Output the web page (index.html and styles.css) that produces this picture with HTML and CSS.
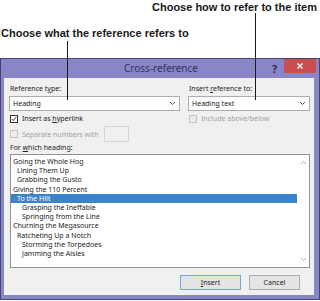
FILE: index.html
```html
<!DOCTYPE html>
<html>
<head>
<meta charset="utf-8">
<link rel="stylesheet" href="styles.css">
</head>
<body>
<div class="page">
  <div class="captions">
    <div class="cap cap-how">Choose how to refer to the item</div>
    <div class="cap cap-what">Choose what the reference refers to</div>
  </div>
  <div class="dialog">
    <div class="titlebar">
      <span class="title">Cross-reference</span>
      <span class="help">?</span>
      <span class="close"><svg width="8" height="8" viewBox="0 0 8 8"><path d="M1.5 1.5 L6.5 6.5 M6.5 1.5 L1.5 6.5" stroke="#fff" stroke-width="1.4"/></svg></span>
    </div>
    <div class="client">
      <div class="grid">
        <div class="label">Reference t<u>y</u>pe:</div>
        <div class="label">Insert <u>r</u>eference to:</div>
        <div class="select"><span>Heading</span><svg class="chev" width="7" height="5" viewBox="0 0 7 5"><path d="M1 1 L3.5 3.5 L6 1" fill="none" stroke="#555" stroke-width="1"/></svg></div>
        <div class="select"><span>Heading text</span><svg class="chev" width="7" height="5" viewBox="0 0 7 5"><path d="M1 1 L3.5 3.5 L6 1" fill="none" stroke="#555" stroke-width="1"/></svg></div>
        <div class="check-row"><span class="box checked"><svg width="8" height="8" viewBox="0 0 8 8"><path d="M1.3 4.2 L3.1 6 L6.8 1.6" fill="none" stroke="#222" stroke-width="1.3"/></svg></span><span>Insert as <u>h</u>yperlink</span></div>
        <div class="check-row disabled"><span class="box"></span><span>Include above/below</span></div>
      </div>
      <div class="sep-row disabled"><span class="box"></span><span class="sep-text">Separate numbers with</span><span class="sep-input"></span></div>
      <div class="label list-label">For <u>w</u>hich heading:</div>
      <div class="listbox">
        <div class="items">
          <div class="item l0">Going the Whole Hog</div>
          <div class="item l1">Lining Them Up</div>
          <div class="item l1">Grabbing the Gusto</div>
          <div class="item l0">Giving the 110 Percent</div>
          <div class="item l1 sel">To the Hilt</div>
          <div class="item l2">Grasping the Ineffable</div>
          <div class="item l2">Springing from the Line</div>
          <div class="item l0">Churning the Megasource</div>
          <div class="item l1">Ratcheting Up a Notch</div>
          <div class="item l2">Storming the Torpedoes</div>
          <div class="item l2">Jamming the Aisles</div>
        </div>
        <div class="scrollbar">
          <svg width="7" height="5" viewBox="0 0 7 5"><path d="M1 4 L3.5 1.5 L6 4" fill="none" stroke="#b0b0b0" stroke-width="1"/></svg>
          <svg width="7" height="5" viewBox="0 0 7 5"><path d="M1 1 L3.5 3.5 L6 1" fill="none" stroke="#b0b0b0" stroke-width="1"/></svg>
        </div>
      </div>
      <div class="buttons">
        <div class="btn default"><u>I</u>nsert</div>
        <div class="btn cancel">Cancel</div>
      </div>
    </div>
  </div>
  <div class="leader leader-what"></div>
  <div class="leader leader-how"></div>
</div>
</body>
</html>
```
FILE: styles.css
```css
html, body {
  margin: 0;
  padding: 0;
  background: #ffffff;
}
.page {
  position: relative;
  width: 320px;
  height: 301px;
  overflow: hidden;
}
.captions {
  height: 58px;
  font-family: "Liberation Sans Narrow", "Liberation Sans", Arial, sans-serif;
  font-weight: bold;
  font-size: 11px;
  line-height: 12px;
  color: #1a1a1a;
}
.cap-how {
  padding-top: 1px;
  margin-left: 152px;
  white-space: nowrap;
}
.cap-what {
  margin-top: 14px;
  margin-left: 1px;
  white-space: nowrap;
}
.leader {
  position: absolute;
  width: 1px;
  background: #1a1a1a;
}
.leader-what {
  left: 67px;
  top: 41px;
  height: 59px;
}
.leader-how {
  left: 255px;
  top: 13px;
  height: 87px;
}
.dialog {
  width: 318px;
  height: 240px;
  border: 1px solid #44426e;
  background: #8886c7;
  display: flex;
  flex-direction: column;
  font-family: "Noto Sans", "Open Sans", sans-serif;
  font-size: 7px;
  color: #222;
}
.titlebar {
  height: 19px;
  position: relative;
  display: flex;
  align-items: center;
  justify-content: center;
}
.title {
  font-size: 10px;
  color: #34335a;
  margin-left: 2px;
  margin-top: -1px;
}
.help {
  position: absolute;
  left: 271px;
  top: 2px;
  font-size: 11px;
  font-weight: bold;
  color: #2e2d4a;
}
.close {
  position: absolute;
  left: 283px;
  top: 0;
  width: 32px;
  height: 14px;
  background: #c94f50;
  display: flex;
  align-items: center;
  justify-content: center;
}
.client {
  flex: 1;
  margin: 0 5px 4px 3px;
  background: #f0f0f0;
  padding: 6px 4px 5px 5px;
  display: flex;
  flex-direction: column;
}
.grid {
  display: grid;
  grid-template-columns: 171px 122px;
  column-gap: 8px;
}
.label {
  line-height: 10px;
  height: 10px;
  padding-left: 1px;
  white-space: nowrap;
}
.grid .label {
  margin-bottom: 2px;
}
.select {
  height: 13px;
  border: 1px solid #abadb3;
  background: #fff;
  display: flex;
  align-items: center;
  justify-content: space-between;
  padding: 0 3px 0 3px;
}
.check-row {
  display: flex;
  align-items: center;
  height: 9px;
  margin-top: 3px;
  padding-left: 1px;
  gap: 4px;
  white-space: nowrap;
}
.box {
  width: 6px;
  height: 6px;
  border: 1px solid #333;
  background: #fff;
  display: flex;
  align-items: center;
  justify-content: center;
  flex: none;
}
.box svg {
  width: 6px;
  height: 6px;
}
.disabled {
  color: #a0a0a0;
}
.disabled .box {
  border-color: #c6c6c6;
  background: #ececec;
}
.sep-row {
  display: flex;
  align-items: center;
  height: 16px;
  margin-top: 3px;
  padding-left: 1px;
  gap: 4px;
  white-space: nowrap;
}
.sep-text {
  width: 78px;
}
.sep-input {
  width: 23px;
  height: 14px;
  border: 1px solid #d5d5d5;
  background: #f0f0f0;
}
.list-label {
  margin-top: 1px;
}
.listbox {
  margin-top: 1px;
  margin-left: 1px;
  height: 112px;
  border: 1px solid #8f9399;
  background: #fff;
  display: flex;
}
.items {
  flex: 1;
  padding-top: 2px;
}
.item {
  height: 9.2px;
  line-height: 9.2px;
  white-space: nowrap;
  color: #222;
}
.l0 { padding-left: 2px; }
.l1 { padding-left: 6px; }
.l2 { padding-left: 11px; }
.item.sel {
  background: #3d83cb;
  color: #fff;
}
.scrollbar {
  width: 12px;
  display: flex;
  flex-direction: column;
  justify-content: space-between;
  align-items: center;
  padding: 5px 0 5px;
}
.buttons {
  display: flex;
  justify-content: flex-end;
  gap: 8px;
  margin-top: 7px;
  padding-right: 10px;
}
.btn {
  height: 13px;
  line-height: 13px;
  text-align: center;
  background: #e4e4e4;
  border: 1px solid #adadad;
}
.btn.default {
  width: 59px;
  border-color: #6fa6dd;
}
.btn.cancel {
  width: 49px;
}
```
